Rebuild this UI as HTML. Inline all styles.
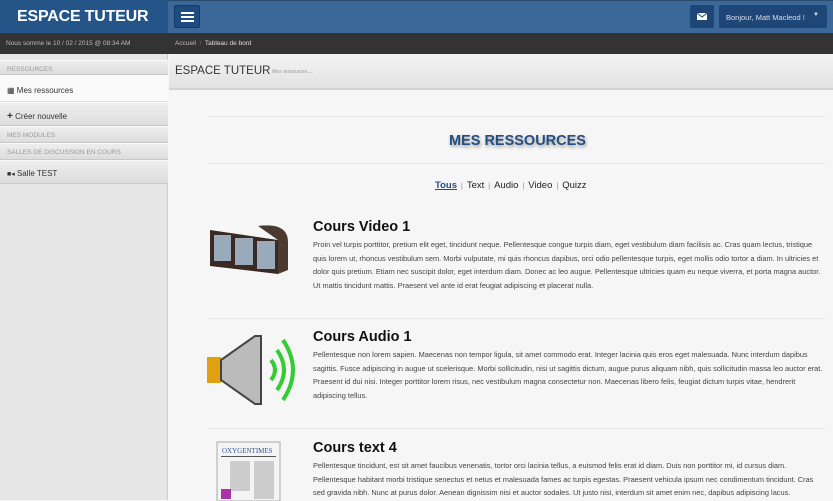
<!DOCTYPE html>
<html><head><meta charset="utf-8"><style>
*{margin:0;padding:0;box-sizing:border-box}
body{width:833px;height:500px;overflow:hidden;font-family:"Liberation Sans",sans-serif;background:#f6f6f6;position:relative}
.top{position:absolute;left:0;top:0;width:833px;height:33px;background:#3b6898;border-top:1px solid #2a4a6e}
.logo{position:absolute;left:0;top:0;width:168px;height:33px;background:#255489;color:#fff;font-weight:bold;font-size:16px;padding:8px 0 0 17px;letter-spacing:-0.2px}
.burger{position:absolute;left:174px;top:5px;width:26px;height:23px;background:#1f4c80;border:1px solid #17395f;border-radius:2px}
.burger i{position:absolute;left:6px;width:13px;height:2px;background:#fff}
.mail{position:absolute;left:690px;top:5px;width:24px;height:23px;background:#1e4777;border-radius:2px}
.user{position:absolute;left:719px;top:5px;width:108px;height:23px;background:#1e4777;border-radius:2px;color:#dde;font-size:7.5px;padding:8px 0 0 7px}
.dark{position:absolute;left:0;top:33px;width:833px;height:21px;background:#333}
.dark span{position:absolute;top:7px;font-size:6.5px;color:#bbb}
.side{position:absolute;left:0;top:54px;width:168px;height:446px;background:#e6e6e6;border-right:1px solid #ccc}
.si{position:absolute;left:0;width:168px;background:linear-gradient(#eee,#ddd);border-top:1px solid #fafafa;border-bottom:1px solid #c8c8c8;font-size:8px;color:#333;padding-left:7px}
.sh{color:#999;font-size:6.5px}
.hdr{position:absolute;left:169px;top:54px;width:664px;height:36px;background:linear-gradient(#f4f4f4,#e2e2e2);border-bottom:2px solid #d4d4d4}
.hdr b{position:absolute;left:6px;top:11px;font-weight:normal;font-size:11.5px;color:#333}
.hdr span{position:absolute;left:103px;top:15px;font-size:5px;color:#999;font-style:italic}
.line{position:absolute;left:208px;width:617px;height:1px;background:#e6e6e6}
.title{position:absolute;left:449px;top:133px;font-weight:bold;font-size:14.5px;color:#244d80;text-shadow:1px 2px 3px #999}
.filt{position:absolute;left:435px;top:180px;font-size:9.5px;color:#222}
.filt u{color:#244d80;font-weight:bold}
.filt s{text-decoration:none;color:#888;margin:0 4px;font-size:7px}
.it h2{position:absolute;left:313px;font-size:14.5px;color:#111}
.it p{position:absolute;left:313px;width:520px;font-size:7.4px;line-height:13.7px;color:#444;white-space:nowrap}
</style></head><body>
<div class="top"></div>
<div class="logo">ESPACE TUTEUR</div>
<div class="burger"><i style="top:6px"></i><i style="top:10px"></i><i style="top:14px"></i></div>
<div class="mail"><svg width="24" height="23"><rect x="7" y="8" width="10" height="7" fill="#fff"/><path d="M7 8l5 4 5-4" stroke="#1e4777" fill="none"/></svg></div>
<div class="user">Bonjour, Matt Macleod !<span style="position:absolute;right:8px;top:7px;font-size:6px">▼</span></div>
<div class="dark"><span style="left:6px">Nous somme le 10 / 02 / 2015 @ 08:34 AM</span><span style="left:175px">Accueil &nbsp;<span style="color:#777;position:static">/</span>&nbsp; <span style="color:#ddd;position:static">Tableau de bord</span></span></div>
<div class="side">
<div class="si sh" style="top:6px;height:15px;padding-top:5px">RESSOURCES</div>
<div class="si" style="top:21px;height:27px;padding-top:10px;background:#fafafa;border-bottom:1px solid #ddd"><span style="font-size:8px">▦</span> Mes ressources</div>
<div class="si" style="top:48px;height:24px;padding-top:8px"><b style="font-size:10px">+</b> Créer nouvelle</div>
<div class="si sh" style="top:72px;height:17px;padding-top:5px">MES MODULES</div>
<div class="si sh" style="top:89px;height:17px;padding-top:5px">SALLES DE DISCUSSION EN COURS</div>
<div class="si" style="top:106px;height:24px;padding-top:8px"><span style="font-size:7px">■◂</span> Salle TEST</div>
</div>
<div class="hdr"><b>ESPACE TUTEUR</b><span>Mes ressources....</span></div>
<div class="line" style="top:116px"></div>
<div class="title">MES RESSOURCES</div>
<div class="line" style="top:163px"></div>
<div class="filt"><u>Tous</u><s>|</s>Text<s>|</s>Audio<s>|</s>Video<s>|</s>Quizz</div>
<div class="it">
<svg style="position:absolute;left:208px;top:222px" width="82" height="56"><path d="M2 8 L70 18 L70 52 L2 44Z" fill="#3a2a22"/><rect x="6" y="13" width="17" height="26" fill="#9ab"/><rect x="27" y="16" width="18" height="27" fill="#9ab"/><rect x="49" y="19" width="18" height="28" fill="#9ab"/><path d="M50 4 Q80 0 80 20 L80 48 L70 52 L70 18Z" fill="#4a3a30"/></svg>
<h2 style="top:219px">Cours Video 1</h2>
<p style="top:238px">Proin vel turpis porttitor, pretium elit eget, tincidunt neque. Pellentesque congue turpis diam, eget vestibulum diam facilisis ac. Cras quam lectus, tristique<br>quis lorem ut, rhoncus vestibulum sem. Morbi vulputate, mi quis rhoncus dapibus, orci odio pellentesque turpis, eget mollis odio tortor a diam. In ultricies et<br>dolor quis pretium. Etiam nec suscipit dolor, eget interdum diam. Donec ac leo augue. Pellentesque ultricies quam eu neque viverra, et porta magna auctor.<br>Ut mattis tincidunt mattis. Praesent vel ante id erat feugiat adipiscing et placerat nulla.</p>
</div>
<div class="line" style="top:318px"></div>
<div class="it">
<svg style="position:absolute;left:205px;top:330px" width="90" height="80"><rect x="2" y="27" width="14" height="26" fill="#e0a010"/><path d="M16 30 L50 6 L56 6 L56 74 L50 74 L16 50Z" fill="#bbb" stroke="#444" stroke-width="2"/><path d="M66 30 Q74 40 66 50" stroke="#3c3" stroke-width="4" fill="none"/><path d="M72 20 Q86 40 72 60" stroke="#3c3" stroke-width="4" fill="none"/><path d="M78 10 Q98 40 78 70" stroke="#3c3" stroke-width="4" fill="none"/></svg>
<h2 style="top:329px">Cours Audio 1</h2>
<p style="top:348px">Pellentesque non lorem sapien. Maecenas non tempor ligula, sit amet commodo erat. Integer lacinia quis eros eget malesuada. Nunc interdum dapibus<br>sagittis. Fusce adipiscing in augue ut scelerisque. Morbi sollicitudin, nisi ut sagittis dictum, augue purus aliquam nibh, quis sollicitudin massa leo auctor erat.<br>Praesent id dui nisi. Integer porttitor lorem risus, nec vestibulum magna consectetur non. Maecenas libero felis, feugiat dictum turpis vitae, hendrerit<br>adipiscing tellus.</p>
</div>
<div class="line" style="top:428px"></div>
<div class="it">
<svg style="position:absolute;left:216px;top:441px" width="66" height="60"><rect x="1" y="1" width="63" height="59" fill="#f4f4f4" stroke="#aaa"/><text x="6" y="12" font-size="7" fill="#3556a0" font-family="Liberation Serif">OXYGENTIMES</text><rect x="5" y="15" width="55" height="1" fill="#555"/><rect x="14" y="20" width="20" height="30" fill="#ccc"/><rect x="38" y="20" width="20" height="38" fill="#ccc"/><rect x="5" y="48" width="10" height="10" fill="#a3a"/></svg>
<h2 style="top:440px">Cours text 4</h2>
<p style="top:459px">Pellentesque tincidunt, est sit amet faucibus venenatis, tortor orci lacinia tellus, a euismod felis erat id diam. Duis non porttitor mi, id cursus diam.<br>Pellentesque habitant morbi tristique senectus et netus et malesuada fames ac turpis egestas. Praesent vehicula ipsum nec condimentum tincidunt. Cras<br>sed gravida nibh. Nunc at purus dolor. Aenean dignissim nisi et auctor sodales. Ut justo nisi, interdum sit amet enim nec, dapibus adipiscing lacus.</p>
</div>
</body></html>
